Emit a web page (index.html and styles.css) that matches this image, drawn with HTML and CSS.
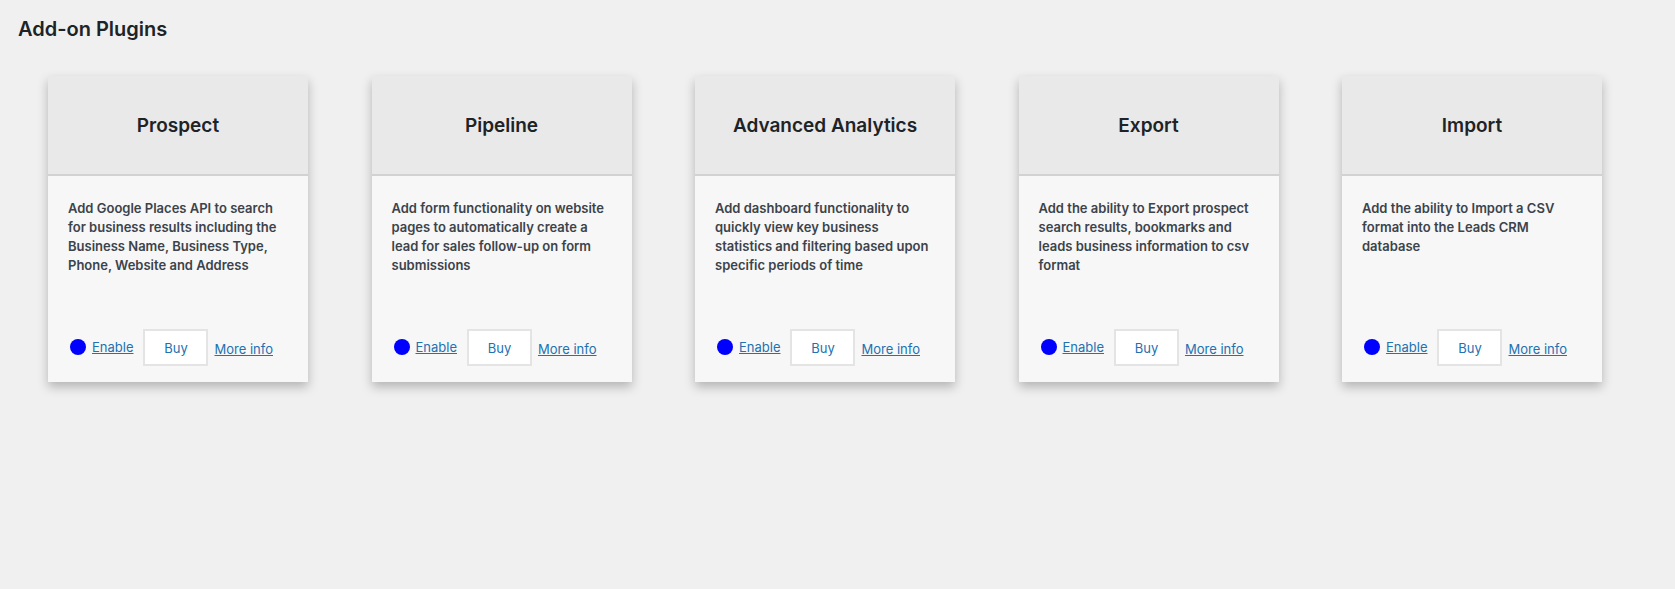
FILE: index.html
```html
<!DOCTYPE html>
<html>
<head>
<meta charset="utf-8">
<link rel="stylesheet" href="styles.css">
</head>
<body>
<div class="wrap">
  <h1 class="page-title">Add-on Plugins</h1>
  <div class="cards">
    <div class="card">
      <div class="card-head"><h2>Prospect</h2></div>
      <div class="card-body">
        <p class="desc">Add Google Places API to search for business results including the Business Name, Business Type, Phone, Website and Address</p>
        <div class="actions">
          <span class="dot"></span><a class="link enable" href="#">Enable</a>
          <span class="buy">Buy</span>
          <a class="link more" href="#">More info</a>
        </div>
      </div>
    </div>
    <div class="card">
      <div class="card-head"><h2>Pipeline</h2></div>
      <div class="card-body">
        <p class="desc">Add form functionality on website pages to automatically create a lead for sales follow-up on form submissions</p>
        <div class="actions">
          <span class="dot"></span><a class="link enable" href="#">Enable</a>
          <span class="buy">Buy</span>
          <a class="link more" href="#">More info</a>
        </div>
      </div>
    </div>
    <div class="card">
      <div class="card-head"><h2>Advanced Analytics</h2></div>
      <div class="card-body">
        <p class="desc">Add dashboard functionality to quickly view key business statistics and filtering based upon specific periods of time</p>
        <div class="actions">
          <span class="dot"></span><a class="link enable" href="#">Enable</a>
          <span class="buy">Buy</span>
          <a class="link more" href="#">More info</a>
        </div>
      </div>
    </div>
    <div class="card">
      <div class="card-head"><h2>Export</h2></div>
      <div class="card-body">
        <p class="desc">Add the ability to Export prospect search results, bookmarks and leads business information to csv format</p>
        <div class="actions">
          <span class="dot"></span><a class="link enable" href="#">Enable</a>
          <span class="buy">Buy</span>
          <a class="link more" href="#">More info</a>
        </div>
      </div>
    </div>
    <div class="card">
      <div class="card-head"><h2>Import</h2></div>
      <div class="card-body">
        <p class="desc">Add the ability to Import a CSV format into the Leads CRM database</p>
        <div class="actions">
          <span class="dot"></span><a class="link enable" href="#">Enable</a>
          <span class="buy">Buy</span>
          <a class="link more" href="#">More info</a>
        </div>
      </div>
    </div>
  </div>
</div>
</body>
</html>
```
FILE: styles.css
```css
html, body {
  margin: 0;
  padding: 0;
  background: #f0f0f0;
}
body {
  min-height: 100vh;
  font-family: Inter, "Noto Sans", "Liberation Sans", sans-serif;
  color: #1d2327;
}
.wrap {
  padding: 17px 0 40px 18px;
}
.page-title {
  margin: 0;
  font-size: 20px;
  font-weight: 600;
  line-height: 24px;
  color: #1d2327;
}
.cards {
  display: flex;
  gap: 63.5px;
  padding: 35px 0 0 30px;
}
.card {
  width: 260px;
  height: 306px;
  display: flex;
  flex-direction: column;
  background: #f7f7f7;
  box-shadow: 0 5px 10px rgba(0, 0, 0, 0.25);
}
.card-head {
  height: 98px;
  flex: none;
  display: flex;
  align-items: center;
  justify-content: center;
  background: #e9e9e9;
  border-bottom: 2px solid #d2d2d2;
}
.card-head h2 {
  margin: 0;
  font-size: 19px;
  font-weight: 600;
  color: #1d2327;
}
.card-body {
  flex: 1;
  display: flex;
  flex-direction: column;
  padding: 23px 20px 16px 20px;
}
.desc {
  margin: 0;
  font-size: 13px;
  line-height: 19px;
  font-weight: 600;
  color: #3c434a;
}
.actions {
  margin-top: auto;
  display: flex;
  align-items: center;
  height: 37px;
}
.dot {
  width: 16px;
  height: 16px;
  border-radius: 50%;
  background: #0000ff;
  margin: 0 6px 1px 2px;
}
.link {
  font-size: 13px;
  color: #2271b1;
  text-decoration: underline;
}
.enable {
  margin-bottom: 2px;
}
.buy {
  box-sizing: border-box;
  width: 65px;
  height: 37px;
  margin: 0 6px 0 10px;
  display: flex;
  align-items: center;
  justify-content: center;
  background: #fff;
  border: 2px solid #e4e4e4;
  font-size: 13px;
  color: #2271b1;
}
.more {
  margin-top: 2px;
}
```
